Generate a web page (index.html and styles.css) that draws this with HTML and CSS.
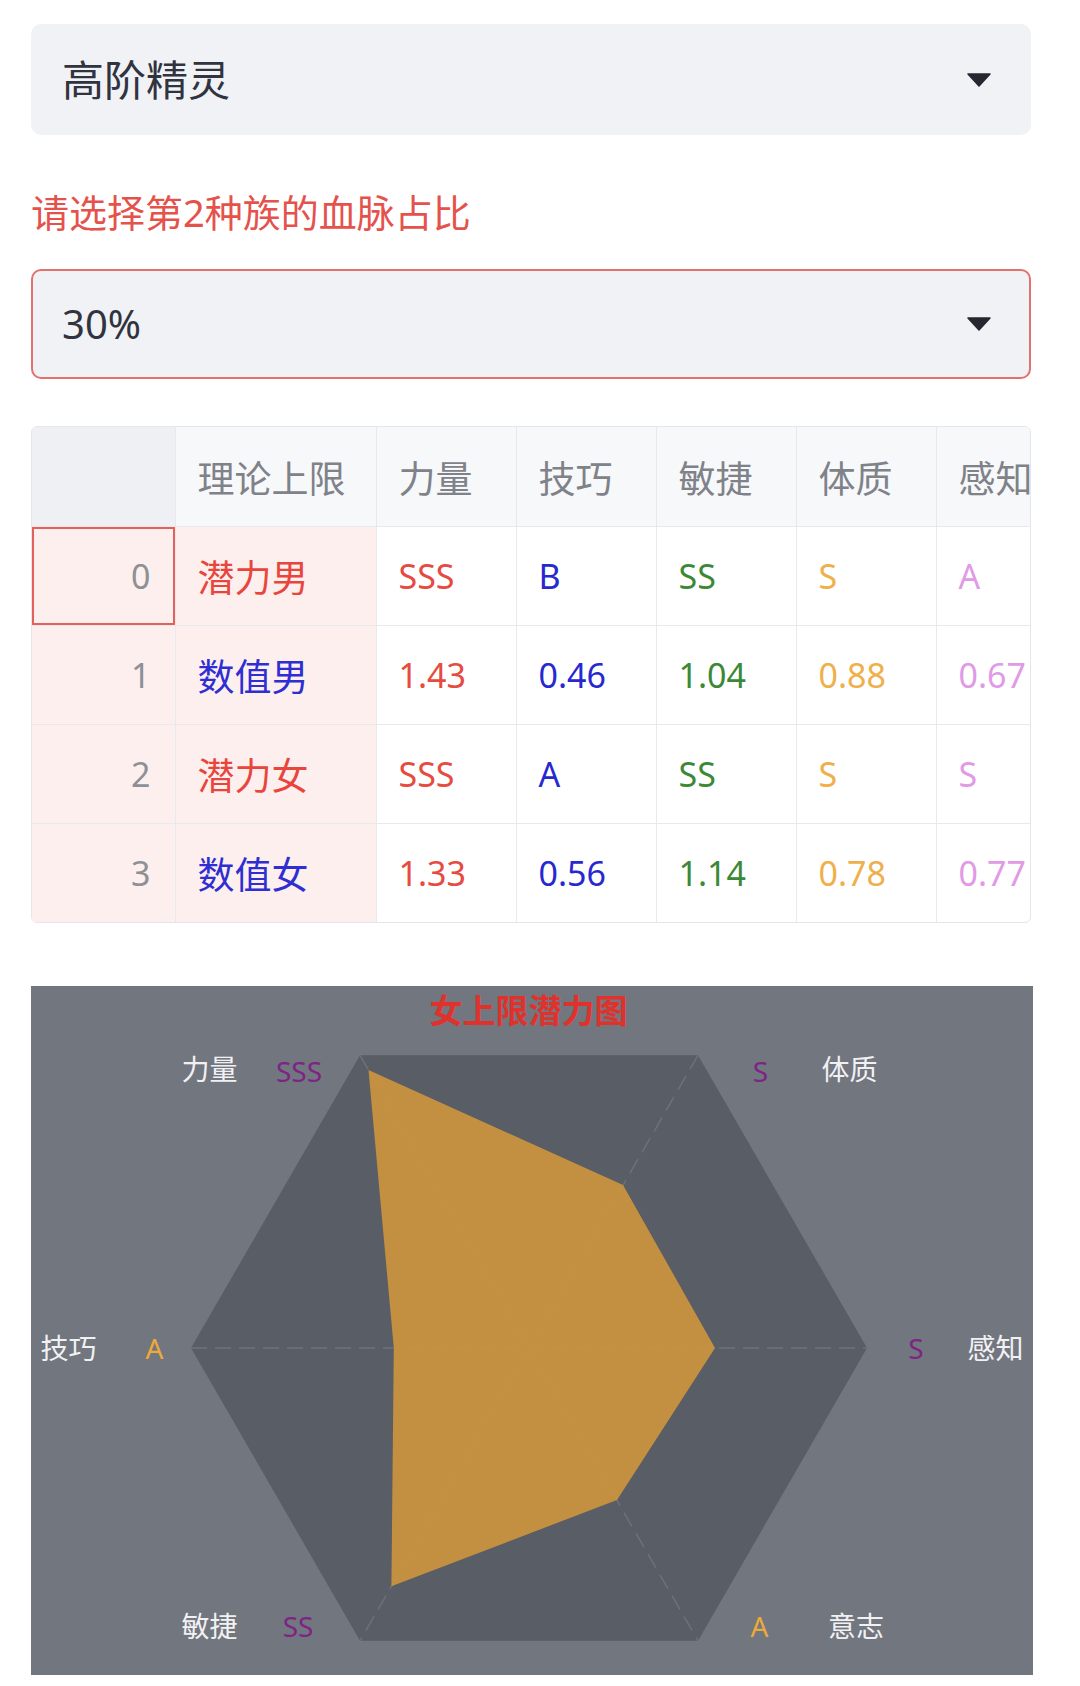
FILE: index.html
```html
<!DOCTYPE html>
<html lang="zh">
<head>
  <meta charset="UTF-8">
  <meta name="viewport" content="width=device-width, initial-scale=1.0">
  <title>血脉潜力</title>
  <link rel="stylesheet" href="styles.css">
</head>
<body>
  <div class="page">

    <!-- 种族选择 -->
    <div class="select">
      <span class="select-value">高阶精灵</span>
      <svg class="caret" width="24" height="14" viewBox="0 0 24 14"><path d="M1 1 H23 L12 13 Z" fill="#262730" stroke="#262730" stroke-width="1.5" stroke-linejoin="round"/></svg>
    </div>

    <p class="label">请选择第2种族的血脉占比</p>

    <div class="select select-active">
      <span class="select-value">30%</span>
      <svg class="caret" width="24" height="14" viewBox="0 0 24 14"><path d="M1 1 H23 L12 13 Z" fill="#262730" stroke="#262730" stroke-width="1.5" stroke-linejoin="round"/></svg>
    </div>

    <!-- 数据表 -->
    <div class="table-wrap">
      <table class="grid">
        <colgroup>
          <col class="col-idx">
          <col class="col-name">
          <col class="col-stat">
          <col class="col-stat">
          <col class="col-stat">
          <col class="col-stat">
          <col class="col-stat">
          <col class="col-stat">
        </colgroup>
        <thead>
          <tr>
            <th class="corner"></th>
            <th>理论上限</th>
            <th>力量</th>
            <th>技巧</th>
            <th>敏捷</th>
            <th>体质</th>
            <th>感知</th>
            <th>意志</th>
          </tr>
        </thead>
        <tbody>
          <tr>
            <td class="idx focus">0</td>
            <td class="name red">潜力男</td>
            <td class="c-str">SSS</td>
            <td class="c-tec">B</td>
            <td class="c-agi">SS</td>
            <td class="c-con">S</td>
            <td class="c-per">A</td>
            <td class="c-wil">A</td>
          </tr>
          <tr>
            <td class="idx">1</td>
            <td class="name blue">数值男</td>
            <td class="c-str">1.43</td>
            <td class="c-tec">0.46</td>
            <td class="c-agi">1.04</td>
            <td class="c-con">0.88</td>
            <td class="c-per">0.67</td>
            <td class="c-wil">0.63</td>
          </tr>
          <tr>
            <td class="idx">2</td>
            <td class="name red">潜力女</td>
            <td class="c-str">SSS</td>
            <td class="c-tec">A</td>
            <td class="c-agi">SS</td>
            <td class="c-con">S</td>
            <td class="c-per">S</td>
            <td class="c-wil">A</td>
          </tr>
          <tr>
            <td class="idx">3</td>
            <td class="name blue">数值女</td>
            <td class="c-str">1.33</td>
            <td class="c-tec">0.56</td>
            <td class="c-agi">1.14</td>
            <td class="c-con">0.78</td>
            <td class="c-per">0.77</td>
            <td class="c-wil">0.73</td>
          </tr>
        </tbody>
      </table>
    </div>

    <!-- 雷达图 -->
    <div class="chart">
      <svg class="radar" viewBox="0 0 1002 689" width="1002" height="689">
        <polygon class="hex" points="160,362 329,69.3 667,69.3 836,362 667,654.7 329,654.7"/>
        <g class="axis">
          <line x1="160" y1="362" x2="836" y2="362"/>
          <line x1="329" y1="69.3" x2="667" y2="654.7"/>
          <line x1="667" y1="69.3" x2="329" y2="654.7"/>
        </g>
        <polygon class="area" points="337.5,84 592,199 684,362 586,514 360.4,600.3 362.8,362"/>

        <text class="title" x="497.5" y="24">女上限潜力图</text>

        <text class="axis-name" x="178.5" y="83">力量</text>
        <text class="grade g-purple" x="268" y="85">SSS</text>

        <text class="grade g-purple" x="729.5" y="85">S</text>
        <text class="axis-name" x="818.5" y="83">体质</text>

        <text class="grade g-purple" x="885" y="362">S</text>
        <text class="axis-name" x="964.5" y="362">感知</text>

        <text class="axis-name" x="37.5" y="362">技巧</text>
        <text class="grade g-orange" x="123.5" y="362">A</text>

        <text class="axis-name" x="178.5" y="640">敏捷</text>
        <text class="grade g-purple" x="267" y="640">SS</text>

        <text class="grade g-orange" x="728.5" y="640">A</text>
        <text class="axis-name" x="825" y="640">意志</text>
      </svg>
    </div>

  </div>
</body>
</html>
```

FILE: styles.css
```css
body {
  margin: 0;
  background-color: white;
  color: #31333f;
  font-family: "Noto Sans", "Noto Sans CJK SC", sans-serif;
}

.page {
  padding: 24px 49px 0 31px;
}

.select {
  box-sizing: border-box;
  height: 111px;
  background-color: #f0f2f6;
  border-radius: 10px;
  padding: 0 40px 0 31px;
  display: flex;
  align-items: center;
  justify-content: space-between;
}

.select-active {
  height: 110px;
  border: 2px solid #e3716d;
  padding-left: 29px;
  padding-right: 38px;
}

.select-value {
  font-size: 42px;
  line-height: 1;
}

.select-active .select-value {
  font-size: 40px;
}

.caret {
  display: block;
}

.label {
  margin: 54px 0 34px;
  font-size: 38px;
  line-height: 46px;
  color: #e5524b;
}

/* data table */

.table-wrap {
  margin-top: 47px;
  border: 1px solid #e4e6ea;
  border-radius: 6px;
  overflow: hidden;
}

.grid {
  table-layout: fixed;
  width: 1184px;
  border-collapse: collapse;
}

.col-idx {
  width: 143px;
}

.col-name {
  width: 201px;
}

.col-stat {
  width: 140px;
}

.grid th,
.grid td {
  border: 1px solid #e8e9ec;
  padding: 0 22px;
  text-align: left;
  white-space: nowrap;
  overflow: hidden;
}

.grid tr:first-child th {
  border-top: none;
}

.grid tr:last-child td {
  border-bottom: none;
}

.grid th:first-child,
.grid td:first-child {
  border-left: none;
}

.grid th {
  height: 99px;
  background-color: #f7f8fa;
  color: #7f8289;
  font-size: 37px;
  font-weight: 400;
}

.grid th.corner {
  background-color: #eef0f4;
}

.grid td {
  height: 98px;
  font-size: 34px;
}

.grid td.idx {
  text-align: right;
  padding-right: 24px;
  color: #8e9096;
  background-color: #fcefee;
}

.grid td.focus {
  box-shadow: inset 0 0 0 2px #e3605b;
}

.grid td.name {
  font-size: 37px;
  background-color: #fcefee;
}

.red {
  color: #e8463d;
}

.blue {
  color: #2e2ed2;
}

.c-str {
  color: #e64a40;
}

.c-tec {
  color: #2828d0;
}

.c-agi {
  color: #3b8937;
}

.c-con {
  color: #efb04c;
}

.c-per {
  color: #e19ae6;
}

.c-wil {
  color: #efb04c;
}

/* radar chart */

.chart {
  margin-top: 63px;
  width: 1002px;
  height: 689px;
  background-color: #72767f;
}

.radar {
  display: block;
}

.hex {
  fill: #595d65;
}

.axis line {
  stroke: #6d717a;
  stroke-width: 1.5;
  stroke-dasharray: 16 8;
}

.area {
  fill: #c8923f;
  opacity: 0.96;
}

.radar text {
  text-anchor: middle;
  dominant-baseline: central;
  font-family: "Noto Sans", "Noto Sans CJK SC", sans-serif;
}

.title {
  fill: #e0322c;
  font-size: 33px;
  font-weight: 700;
}

.axis-name {
  fill: #f1f1f3;
  font-size: 28px;
}

.grade {
  font-size: 28px;
}

.g-purple {
  fill: #7d2486;
}

.g-orange {
  fill: #eda93a;
}
```
